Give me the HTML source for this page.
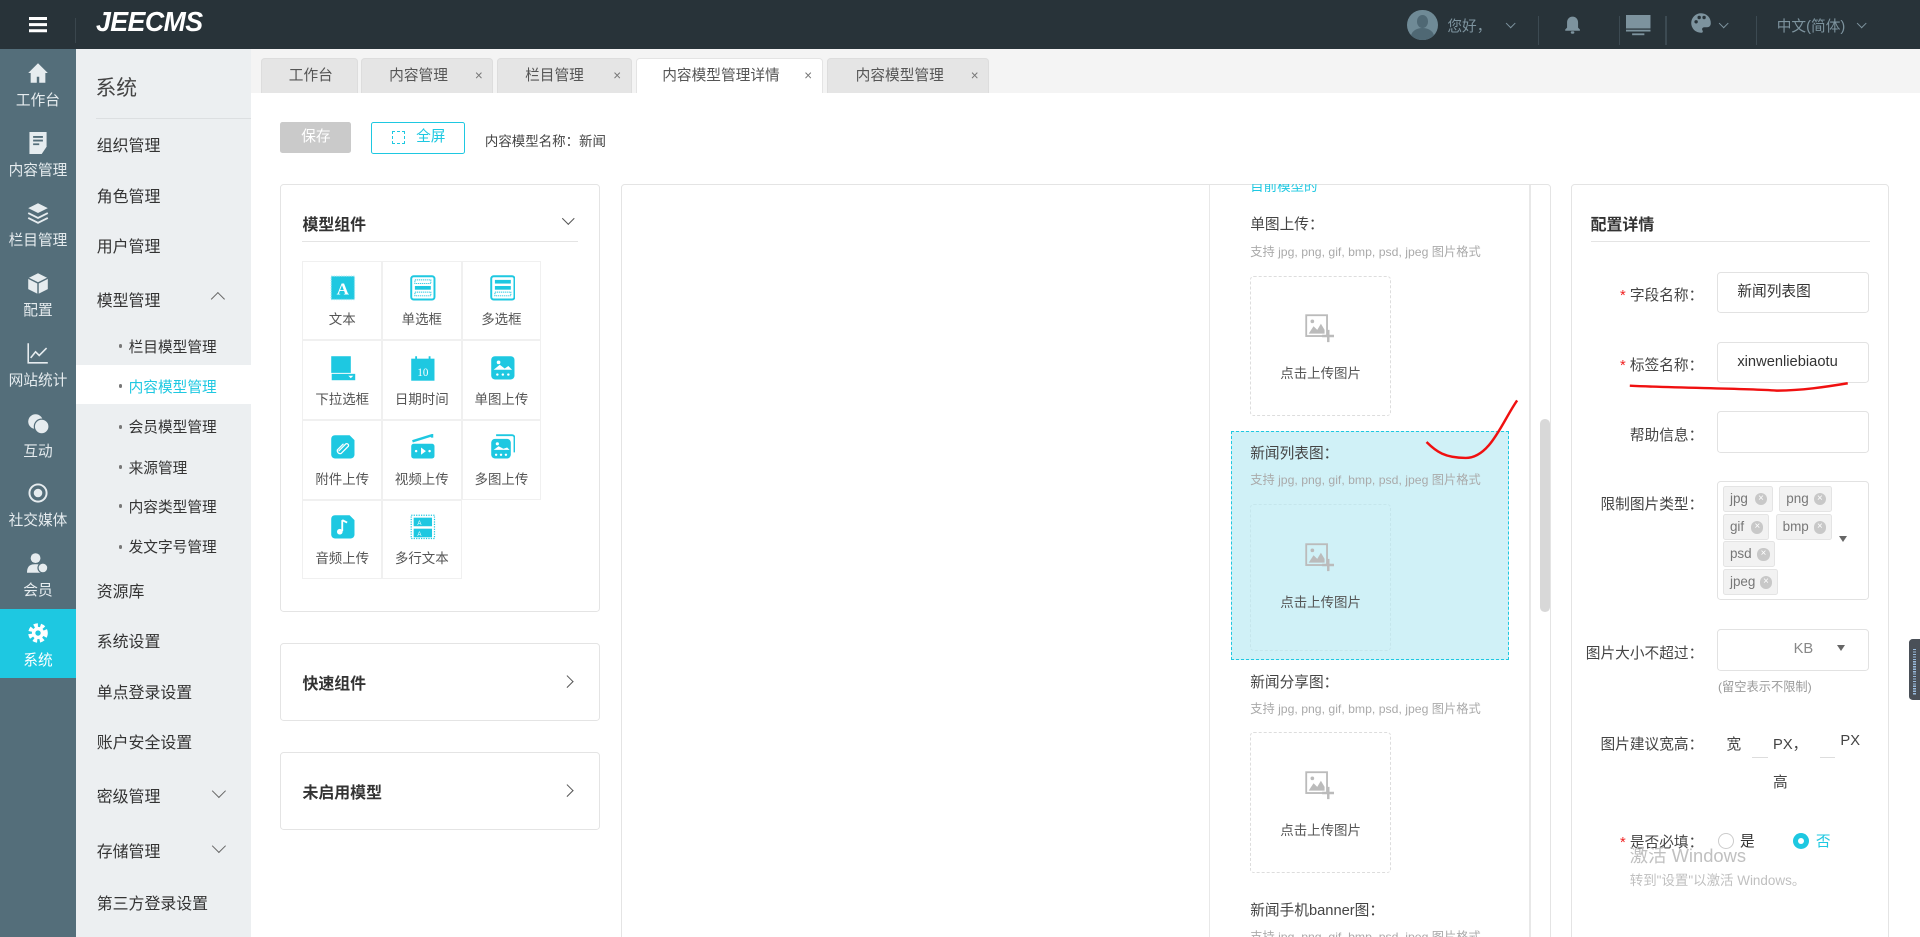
<!DOCTYPE html>
<html><head><meta charset="utf-8">
<style>
*{box-sizing:border-box;margin:0;padding:0}
html,body{width:1920px;height:937px;overflow:hidden;background:#fff}
#w{position:relative;width:1568px;height:765px;zoom:1.2244898;font-family:"Liberation Sans","Noto Sans CJK SC",sans-serif;color:#333;font-size:12px;overflow:hidden}
.a{position:absolute}
.hdr{left:0;top:0;width:1568px;height:40px;background:#283339}
.rail{left:0;top:40px;width:62px;height:725px;background:#546e7a}
.ri{position:absolute;left:0;width:62px;height:57px;text-align:center;color:#e6ecef;font-size:12px}
.ri svg{position:absolute;left:22px;top:11px}
.ri span{position:absolute;left:0;right:0;top:33px}
.sub{left:62px;top:40px;width:143px;height:725px;background:#eceff1}
.sm{position:absolute;left:17px;font-size:13px;color:#333}
.ss{position:absolute;left:30px;font-size:12px;color:#333}
.ss:before{content:"";position:absolute;left:-8px;top:7px;width:3px;height:3px;background:#777;border-radius:50%}
.tabs{left:205px;top:40px;width:1363px;height:36px;background:#f4f4f4}
.tab{position:absolute;top:47px;height:29px;background:#e5e5e5;border:1px solid #ddd;border-bottom:none;border-radius:3px 3px 0 0;font-size:12px;color:#555;line-height:28px}
.tab i{position:absolute;right:8px;top:0;font-style:normal;color:#777;font-size:11px}
.card{position:absolute;background:#fff;border:1px solid #e4e4e4;border-radius:3px}
.cell{position:absolute;width:65px;height:65px;border:1px solid #f0f0f0;text-align:center;font-size:11px;color:#555}
.cell .ic{position:absolute;left:22px;top:11px;width:21px;height:21px}
.cell span{position:absolute;left:0;right:0;top:38px}
.lbl{position:absolute;font-size:12px;color:#444}
.hint{position:absolute;font-size:10px;color:#aaa}
.up{position:absolute;width:115px;border:1px dashed #ddd;border-radius:3px;text-align:center;font-size:11px;color:#555}
.up svg{position:absolute;left:44px}
.fl{position:absolute;right:0;font-size:12px;color:#444;text-align:right}
.inp{position:absolute;left:1402px;width:124px;height:34px;border:1px solid #e2e2e2;border-radius:3px;font-size:12px;color:#333;padding-left:16px;line-height:32px}
.tg{position:absolute;height:21px;border:1px solid #e4e4e4;background:#f2f2f2;border-radius:2px;font-size:11px;color:#777;line-height:19px;padding-left:5px}
.tg b{position:absolute;right:4px;top:5px;width:10px;height:10px;border-radius:50%;background:#c8c8c8;color:#fff;font-size:8px;line-height:10px;text-align:center;font-weight:normal}
.red{color:#f02020}
.chv{position:absolute;width:6px;height:6px;border-right:1px solid #7d939e;border-bottom:1px solid #7d939e;transform:rotate(45deg)}
</style></head><body><div id="w">
<div class="a hdr"></div>
<div class="a" style="left:24px;top:14px;width:14px;height:2px;background:#fff;box-shadow:0 5px 0 #fff,0 10px 0 #fff"></div>
<div class="a" style="left:61px;top:15px;width:1px;height:20px;background:#3a464d"></div>
<div class="a" style="left:78px;top:5px;font-size:23px;font-weight:bold;font-style:italic;color:#fff;letter-spacing:-0.5px;transform:scaleX(0.95);transform-origin:left">JEECMS</div>
<div class="a" style="left:1149px;top:8px;width:25px;height:25px;border-radius:50%;background:#6f8a96;overflow:hidden"><div style="position:absolute;left:8px;top:4px;width:9px;height:11px;border-radius:50%;background:#4f6874"></div><div style="position:absolute;left:3px;top:15px;width:19px;height:14px;border-radius:50%;background:#4f6874"></div></div>
<div class="a" style="left:1182px;top:12px;font-size:12px;color:#7d939e">您好，</div>
<div class="chv" style="left:1231px;top:16px"></div>
<div class="a" style="left:1256px;top:13px;width:1px;height:24px;background:#3c4a52"></div>
<svg class="a" style="left:1277px;top:13px" width="14" height="15" viewBox="0 0 14 15"><path d="M7 0.5c-3 0-4.5 2.3-4.5 5v4L1 11v1h12v-1l-1.5-1.5v-4c0-2.7-1.5-5-4.5-5z" fill="#7d939e"/><rect x="5.5" y="12.5" width="3" height="2" rx="1" fill="#7d939e"/></svg>
<div class="a" style="left:1322px;top:13px;width:1px;height:24px;background:#3c4a52"></div>
<svg class="a" style="left:1328px;top:12px" width="20" height="17" viewBox="0 0 20 17"><rect x="0" y="0" width="20" height="11" fill="#7d939e"/><rect x="0" y="12" width="20" height="1.5" fill="#7d939e"/><rect x="5" y="15" width="10" height="1.5" fill="#7d939e"/></svg>
<div class="a" style="left:1360px;top:13px;width:1px;height:24px;background:#3c4a52"></div>
<svg class="a" style="left:1380px;top:10px" width="18" height="18" viewBox="0 0 18 18"><path d="M9 1a8 8 0 1 0 0 16c1.5 0 1.8-1 1.2-2-.8-1.2 0-2.5 1.5-2.5H14a3 3 0 0 0 3-3A8 8 0 0 0 9 1z" fill="#7d939e"/><circle cx="5" cy="8" r="1.4" fill="#283339"/><circle cx="7.5" cy="4.5" r="1.4" fill="#283339"/><circle cx="11.5" cy="4.5" r="1.4" fill="#283339"/></svg>
<div class="chv" style="left:1405px;top:16px"></div>
<div class="a" style="left:1434px;top:13px;width:1px;height:24px;background:#3c4a52"></div>
<div class="a" style="left:1451px;top:12px;font-size:12px;color:#7d939e">中文(简体)</div>
<div class="chv" style="left:1517px;top:16px"></div>

<div class="a rail"></div>
<div class="ri" style="top:40px"><svg width="18" height="18" viewBox="0 0 18 18"><path d="M9 1L1 9h2v8h5v-5h2v5h5V9h2z" fill="#e6ecef"/></svg><span>工作台</span></div>
<div class="ri" style="top:97px"><svg width="18" height="18" viewBox="0 0 18 18"><path d="M2 0h14v12l-4 6H2z" fill="#e6ecef"/><path d="M5 4h8M5 7h8M5 10h5" stroke="#546e7a" stroke-width="1.5"/></svg><span>内容管理</span></div>
<div class="ri" style="top:154px"><svg width="18" height="18" viewBox="0 0 18 18"><path d="M9 1l8 4-8 4-8-4z" fill="#e6ecef"/><path d="M1 9l8 4 8-4M1 13l8 4 8-4" stroke="#e6ecef" stroke-width="1.5" fill="none"/></svg><span>栏目管理</span></div>
<div class="ri" style="top:211px"><svg width="18" height="18" viewBox="0 0 18 18"><path d="M9 1l8 4v9l-8 4-8-4V5z" fill="#e6ecef"/><path d="M1 5l8 4 8-4M9 9v9" stroke="#546e7a" stroke-width="1.2" fill="none"/></svg><span>配置</span></div>
<div class="ri" style="top:268px"><svg width="18" height="18" viewBox="0 0 18 18"><path d="M1 1v16h16M3 13l4-5 3 3 6-6" stroke="#e6ecef" stroke-width="1.3" fill="none"/></svg><span>网站统计</span></div>
<div class="ri" style="top:326px"><svg width="18" height="18" viewBox="0 0 18 18"><circle cx="7" cy="7" r="6" fill="#e6ecef"/><circle cx="12" cy="11" r="6" fill="#e6ecef" stroke="#546e7a"/></svg><span>互动</span></div>
<div class="ri" style="top:383px"><svg width="18" height="18" viewBox="0 0 18 18"><circle cx="9" cy="9" r="7" stroke="#e6ecef" stroke-width="1.6" fill="none"/><circle cx="9" cy="9" r="3.5" fill="#e6ecef"/></svg><span>社交媒体</span></div>
<div class="ri" style="top:440px"><svg width="18" height="18" viewBox="0 0 18 18"><circle cx="7" cy="5" r="4" fill="#e6ecef"/><path d="M0 17c0-6 3-7 7-7s5 1 5 2v5z" fill="#e6ecef"/><circle cx="13" cy="13" r="4" fill="#e6ecef" stroke="#546e7a"/></svg><span>会员</span></div>
<div class="ri" style="top:497px;background:#1ec8e1;color:#fff"><svg width="18" height="18" viewBox="0 0 18 18"><circle cx="9" cy="9" r="6" stroke="#fff" stroke-width="4" stroke-dasharray="3 2" fill="none"/><circle cx="9" cy="9" r="5" fill="#fff"/><circle cx="9" cy="9" r="2.2" fill="#1ec8e1"/></svg><span>系统</span></div>

<div class="a sub"></div>
<div class="a" style="left:78px;top:58px;font-size:17px;color:#444">系统</div>
<div class="a" style="left:78px;top:96px;width:127px;height:1px;background:#dcdfe1"></div>
<div class="sm" style="left:79px;top:109px">组织管理</div>
<div class="sm" style="left:79px;top:150px">角色管理</div>
<div class="sm" style="left:79px;top:191px">用户管理</div>
<div class="sm" style="left:79px;top:235px">模型管理</div>
<div class="a" style="left:174px;top:240px;width:8px;height:8px;border-left:1px solid #666;border-top:1px solid #666;transform:rotate(45deg)"></div>
<div class="a" style="left:62px;top:298px;width:143px;height:32px;background:#fff"></div>
<div class="ss" style="left:105px;top:274px">栏目模型管理</div>
<div class="ss" style="left:105px;top:307px;color:#1ec8e1">内容模型管理</div>
<div class="ss" style="left:105px;top:340px">会员模型管理</div>
<div class="ss" style="left:105px;top:373px">来源管理</div>
<div class="ss" style="left:105px;top:405px">内容类型管理</div>
<div class="ss" style="left:105px;top:438px">发文字号管理</div>
<div class="sm" style="left:79px;top:473px">资源库</div>
<div class="sm" style="left:79px;top:514px">系统设置</div>
<div class="sm" style="left:79px;top:555px">单点登录设置</div>
<div class="sm" style="left:79px;top:596px">账户安全设置</div>
<div class="sm" style="left:79px;top:640px">密级管理</div>
<div class="a" style="left:175px;top:642px;width:8px;height:8px;border-right:1px solid #666;border-bottom:1px solid #666;transform:rotate(45deg)"></div>
<div class="sm" style="left:79px;top:685px">存储管理</div>
<div class="a" style="left:175px;top:687px;width:8px;height:8px;border-right:1px solid #666;border-bottom:1px solid #666;transform:rotate(45deg)"></div>
<div class="sm" style="left:79px;top:728px">第三方登录设置</div>

<div class="a tabs"></div>
<div class="tab" style="left:213px;width:79px;padding-left:22px">工作台</div>
<div class="tab" style="left:295px;width:108px;padding-left:22px">内容管理<i>×</i></div>
<div class="tab" style="left:406px;width:110px;padding-left:22px">栏目管理<i>×</i></div>
<div class="tab" style="left:519px;width:153px;padding-left:21px;background:#fff;border-color:#e4e4e4">内容模型管理详情<i>×</i></div>
<div class="tab" style="left:675px;width:133px;padding-left:23px">内容模型管理<i>×</i></div>

<div class="a" style="left:229px;top:100px;width:58px;height:25px;background:#cacaca;border-radius:2px;color:#fff;font-size:12px;text-align:center;line-height:25px">保存</div>
<div class="a" style="left:303px;top:100px;width:77px;height:26px;border:1px solid #1ec8e1;border-radius:2px;color:#1ec8e1;font-size:12px;line-height:24px;padding-left:36px">全屏</div>
<div class="a" style="left:320px;top:107px;width:11px;height:11px;border:1px dashed #1ec8e1"></div>
<div class="a" style="left:396px;top:106px;font-size:11px;color:#444">内容模型名称：新闻</div>

<div class="card" style="left:229px;top:150px;width:261px;height:350px"></div>
<div class="a" style="left:247px;top:173px;font-size:13px;font-weight:bold;color:#333">模型组件</div>
<div class="a" style="left:461px;top:175px;width:7px;height:7px;border-right:1px solid #555;border-bottom:1px solid #555;transform:rotate(45deg)"></div>
<div class="a" style="left:247px;top:197px;width:225px;height:1px;background:#e4e4e4"></div>

<div class="cell" style="left:247px;top:213px"><svg class="ic" viewBox="0 0 21 21"><rect x="1" y="1" width="19" height="19" fill="#1ec8e1" stroke="#8fe2ee" stroke-dasharray="1 1"/><text x="10.5" y="16" text-anchor="middle" font-size="14" font-weight="bold" fill="#fff" font-family="Liberation Serif">A</text></svg><span>文本</span></div>
<div class="cell" style="left:312px;top:213px"><svg class="ic" viewBox="0 0 21 21"><rect x="1" y="1" width="19" height="19" rx="2" fill="none" stroke="#1ec8e1" stroke-width="1.6"/><rect x="4" y="4" width="13" height="3" fill="none" stroke="#1ec8e1" stroke-width=".8" stroke-dasharray="1 .6"/><rect x="4" y="9" width="13" height="3" fill="#1ec8e1"/><rect x="4" y="14" width="13" height="3" fill="none" stroke="#1ec8e1" stroke-width=".8" stroke-dasharray="1 .6"/></svg><span>单选框</span></div>
<div class="cell" style="left:377px;top:213px"><svg class="ic" viewBox="0 0 21 21"><rect x="1" y="1" width="19" height="19" rx="2" fill="none" stroke="#1ec8e1" stroke-width="1.6"/><rect x="4" y="4" width="13" height="3" fill="#1ec8e1"/><rect x="4" y="9" width="13" height="3" fill="#1ec8e1"/><rect x="4" y="14" width="13" height="3" fill="none" stroke="#1ec8e1" stroke-width=".8" stroke-dasharray="1 .6"/></svg><span>多选框</span></div>
<div class="cell" style="left:247px;top:278px"><svg class="ic" viewBox="0 0 21 21"><rect x="1" y="1" width="16" height="14" fill="#1ec8e1"/><rect x="1" y="15" width="20" height="6" fill="#1ec8e1" stroke="#fff" stroke-width=".8"/><path d="M15 17h4l-2 2z" fill="#fff"/></svg><span>下拉选框</span></div>
<div class="cell" style="left:312px;top:278px"><svg class="ic" viewBox="0 0 21 21"><rect x="1" y="3" width="19" height="18" fill="#1ec8e1"/><path d="M5 1v5M16 1v5" stroke="#1ec8e1" stroke-width="1.5"/><text x="10.5" y="17" text-anchor="middle" font-size="9" fill="#fff" font-family="Liberation Serif">10</text></svg><span>日期时间</span></div>
<div class="cell" style="left:377px;top:278px"><svg class="ic" viewBox="0 0 21 21"><rect x="1" y="1" width="19" height="19" rx="3" fill="#1ec8e1"/><circle cx="7" cy="6" r="1.5" fill="#fff"/><path d="M3 12l5-4 4 3 3-2 3 3z" fill="#fff"/><circle cx="6" cy="16" r="1" fill="#fff"/><circle cx="10.5" cy="16" r="1" fill="#fff"/><circle cx="15" cy="16" r="1" fill="#fff"/></svg><span>单图上传</span></div>
<div class="cell" style="left:247px;top:343px"><svg class="ic" viewBox="0 0 21 21"><path d="M4 1h12l4 4v12a3 3 0 0 1-3 3H4a3 3 0 0 1-3-3V4a3 3 0 0 1 3-3z" fill="#1ec8e1"/><path d="M7 14l6-6a1.5 1.5 0 0 1 2 2l-6 6a2.5 2.5 0 0 1-3-3l5-5" stroke="#fff" fill="none" stroke-width="1"/></svg><span>附件上传</span></div>
<div class="cell" style="left:312px;top:343px"><svg class="ic" viewBox="0 0 21 21"><path d="M2 6l16-5v2" stroke="#1ec8e1" stroke-width="2" fill="none"/><rect x="1" y="8" width="19" height="12" rx="2" fill="#1ec8e1"/><path d="M9 11v6l4-3z" fill="#fff"/><circle cx="5" cy="14" r="1" fill="#fff"/><circle cx="16" cy="14" r="1" fill="#fff"/></svg><span>视频上传</span></div>
<div class="cell" style="left:377px;top:343px"><svg class="ic" viewBox="0 0 21 21"><path d="M5 1h13a2 2 0 0 1 2 2v12" stroke="#1ec8e1" stroke-width="1.5" fill="none"/><rect x="1" y="4" width="16" height="16" rx="3" fill="#1ec8e1"/><circle cx="6" cy="8" r="1.3" fill="#fff"/><path d="M3 13l4-3 4 2 3-1 2 2z" fill="#fff"/><circle cx="5" cy="17" r="1" fill="#fff"/><circle cx="9" cy="17" r="1" fill="#fff"/><circle cx="13" cy="17" r="1" fill="#fff"/></svg><span>多图上传</span></div>
<div class="cell" style="left:247px;top:408px"><svg class="ic" viewBox="0 0 21 21"><path d="M4 1h12l4 4v12a3 3 0 0 1-3 3H4a3 3 0 0 1-3-3V4a3 3 0 0 1 3-3z" fill="#1ec8e1"/><path d="M10 5v9" stroke="#fff" stroke-width="1.5"/><circle cx="8" cy="14.5" r="2.3" fill="#fff"/><path d="M10 5l4 2" stroke="#fff" stroke-width="1.5"/></svg><span>音频上传</span></div>
<div class="cell" style="left:312px;top:408px"><svg class="ic" viewBox="0 0 21 21"><rect x="1" y="1" width="19" height="19" fill="none" stroke="#1ec8e1" stroke-dasharray="1 1"/><rect x="3" y="3" width="15" height="7" fill="#1ec8e1"/><rect x="3" y="12" width="15" height="7" fill="#1ec8e1"/><text x="6" y="9" font-size="5" fill="#fff">A</text><text x="6" y="18" font-size="5" fill="#fff">A</text></svg><span>多行文本</span></div>

<div class="card" style="left:229px;top:525px;width:261px;height:64px"></div>
<div class="a" style="left:247px;top:548px;font-size:13px;font-weight:bold;color:#333">快速组件</div>
<div class="a" style="left:460px;top:553px;width:7px;height:7px;border-right:1px solid #555;border-top:1px solid #555;transform:rotate(45deg)"></div>
<div class="card" style="left:229px;top:614px;width:261px;height:64px"></div>
<div class="a" style="left:247px;top:637px;font-size:13px;font-weight:bold;color:#333">未启用模型</div>
<div class="a" style="left:460px;top:642px;width:7px;height:7px;border-right:1px solid #555;border-top:1px solid #555;transform:rotate(45deg)"></div>

<div class="card" style="left:507px;top:150px;width:760px;height:630px"></div>
<div class="a" style="left:987px;top:151px;width:1px;height:614px;background:#e8e8e8"></div>
<div class="a" style="left:1249px;top:151px;width:1px;height:614px;background:#e8e8e8"></div>
<div class="a" style="left:1258px;top:342px;width:8px;height:158px;background:#d8d8d8;border-radius:4px"></div>
<div class="a" style="left:1021px;top:143px;font-size:11px;color:#1ec8e1">目前模型的</div>
<div class="a" style="left:988px;top:140px;width:260px;height:10px;background:#fff"></div>
<div class="lbl" style="left:1021px;top:174px">单图上传：</div>
<div class="hint" style="left:1021px;top:198px">支持 jpg, png, gif, bmp, psd, jpeg 图片格式</div>
<div class="up" style="left:1021px;top:225px;height:115px"><svg style="top:31px" width="24" height="24" viewBox="0 0 24 24"><rect x="1" y="1" width="17" height="17" fill="none" stroke="#bbb" stroke-width="1.5"/><circle cx="6" cy="6" r="1.5" fill="#bbb"/><path d="M3 16l4-6 3 3 3-5 3 5v3H3z" fill="#bbb"/><path d="M19 13v10M14 18h10" stroke="#bbb" stroke-width="2"/></svg><span style="position:absolute;left:0;right:0;top:70px">点击上传图片</span></div>
<div class="a" style="left:1005px;top:352px;width:227px;height:187px;background:#d0f1f7;border:1px dashed #1ec8e1"></div>
<div class="lbl" style="left:1021px;top:361px">新闻列表图：</div>
<div class="hint" style="left:1021px;top:384px">支持 jpg, png, gif, bmp, psd, jpeg 图片格式</div>
<div class="up" style="left:1021px;top:412px;height:120px;border-color:#c5e6ec"><svg style="top:31px" width="24" height="24" viewBox="0 0 24 24"><rect x="1" y="1" width="17" height="17" fill="none" stroke="#bbb" stroke-width="1.5"/><circle cx="6" cy="6" r="1.5" fill="#bbb"/><path d="M3 16l4-6 3 3 3-5 3 5v3H3z" fill="#bbb"/><path d="M19 13v10M14 18h10" stroke="#bbb" stroke-width="2"/></svg><span style="position:absolute;left:0;right:0;top:70px">点击上传图片</span></div>
<div class="lbl" style="left:1021px;top:548px">新闻分享图：</div>
<div class="hint" style="left:1021px;top:571px">支持 jpg, png, gif, bmp, psd, jpeg 图片格式</div>
<div class="up" style="left:1021px;top:598px;height:115px"><svg style="top:31px" width="24" height="24" viewBox="0 0 24 24"><rect x="1" y="1" width="17" height="17" fill="none" stroke="#bbb" stroke-width="1.5"/><circle cx="6" cy="6" r="1.5" fill="#bbb"/><path d="M3 16l4-6 3 3 3-5 3 5v3H3z" fill="#bbb"/><path d="M19 13v10M14 18h10" stroke="#bbb" stroke-width="2"/></svg><span style="position:absolute;left:0;right:0;top:70px">点击上传图片</span></div>
<div class="lbl" style="left:1021px;top:734px">新闻手机banner图：</div>
<div class="hint" style="left:1021px;top:757px">支持 jpg, png, gif, bmp, psd, jpeg 图片格式</div>

<div class="card" style="left:1283px;top:150px;width:260px;height:630px"></div>
<div class="a" style="left:1299px;top:173px;font-size:13px;font-weight:bold;color:#333">配置详情</div>
<div class="a" style="left:1299px;top:197px;width:228px;height:1px;background:#e4e4e4"></div>
<div class="fl" style="right:177px;top:232px"><span class="red">*</span> 字段名称：</div>
<div class="inp" style="top:222px">新闻列表图</div>
<div class="fl" style="right:177px;top:289px"><span class="red">*</span> 标签名称：</div>
<div class="inp" style="top:279px">xinwenliebiaotu</div>
<div class="fl" style="right:177px;top:346px">帮助信息：</div>
<div class="inp" style="top:336px"></div>
<div class="fl" style="right:177px;top:403px">限制图片类型：</div>
<div class="inp" style="top:393px;height:97px"></div>
<div class="tg" style="left:1407px;top:397px;width:41px">jpg<b>×</b></div>
<div class="tg" style="left:1453px;top:397px;width:43px">png<b>×</b></div>
<div class="tg" style="left:1407px;top:420px;width:38px">gif<b>×</b></div>
<div class="tg" style="left:1450px;top:420px;width:46px">bmp<b>×</b></div>
<div class="tg" style="left:1407px;top:442px;width:43px">psd<b>×</b></div>
<div class="tg" style="left:1407px;top:465px;width:45px">jpeg<b>×</b></div>
<div class="a" style="left:1502px;top:438px;border-left:4px solid transparent;border-right:4px solid transparent;border-top:5px solid #666"></div>
<div class="fl" style="right:177px;top:524px">图片大小不超过：</div>
<div class="inp" style="top:514px;padding-left:62px;color:#888">KB</div>
<div class="a" style="left:1500px;top:527px;border-left:4px solid transparent;border-right:4px solid transparent;border-top:5px solid #666"></div>
<div class="a" style="left:1403px;top:553px;font-size:10px;color:#999">(留空表示不限制)</div>
<div class="fl" style="right:177px;top:599px">图片建议宽高：</div>
<div class="a" style="left:1410px;top:599px;font-size:12px;color:#444">宽</div>
<div class="a" style="left:1431px;top:618px;width:13px;height:1px;background:#ddd"></div>
<div class="a" style="left:1448px;top:599px;font-size:12px;color:#444">PX，</div>
<div class="a" style="left:1486px;top:618px;width:13px;height:1px;background:#ddd"></div>
<div class="a" style="left:1503px;top:599px;font-size:12px;color:#444">PX</div>
<div class="a" style="left:1448px;top:630px;font-size:12px;color:#444">高</div>
<div class="fl" style="right:177px;top:679px"><span class="red">*</span> 是否必填：</div>
<div class="a" style="left:1403px;top:680px;width:13px;height:13px;border:1px solid #ccc;border-radius:50%"></div>
<div class="a" style="left:1421px;top:678px;font-size:12px;color:#333">是</div>
<div class="a" style="left:1464px;top:680px;width:13px;height:13px;border-radius:50%;background:#1ec8e1"><div style="position:absolute;left:4px;top:4px;width:5px;height:5px;border-radius:50%;background:#fff"></div></div>
<div class="a" style="left:1483px;top:678px;font-size:12px;color:#1ec8e1">否</div>
<div class="a" style="left:1331px;top:688px;font-size:15px;color:#c0c0c0">激活 Windows</div>
<div class="a" style="left:1331px;top:710px;font-size:11px;color:#c0c0c0">转到"设置"以激活 Windows。</div>

<div class="a" style="left:1559px;top:522px;width:9px;height:50px;background:#4a5058;border-radius:3px 0 0 3px"></div>
<div class="a" style="left:1562px;top:530px;width:3px;height:38px;background:repeating-linear-gradient(#9bd 0 1px,transparent 1px 2px)"></div>

<svg class="a" style="left:0;top:0" width="1568" height="765" viewBox="0 0 1568 765"><path d="M1331 315c40 2 90 2 120 4c20 0 40-3 58-6" stroke="#f01010" stroke-width="2" fill="none"/><path d="M1165 361c8 8 15 13 32 13c20 0 30-30 42-47" stroke="#f01010" stroke-width="2" fill="none"/></svg>
</div></body></html>
